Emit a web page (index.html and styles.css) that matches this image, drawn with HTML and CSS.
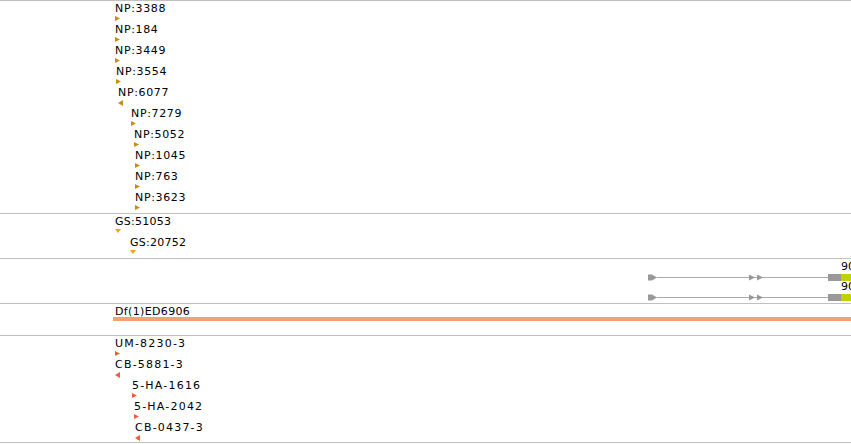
FILE: index.html
```html
<!DOCTYPE html>
<html lang="en">
<head>
  <meta charset="UTF-8">
  <title>Track View</title>
  <link rel="stylesheet" href="styles.css">
</head>
<body>
  <div class="tracks">
    <div class="track track-np" id="trackNP"></div>
    <div class="track track-gs" id="trackGS"></div>
    <div class="track track-genes" id="trackGenes">
      <div class="feature transcript" style="left: 648px; top: 1px;">
        <div class="label tx-label">9065</div>
        <svg class="tx-glyph" width="203" height="7" viewBox="0 0 203 7">
          <polygon points="0,0.5 4,0.5 9,3.5 4,6.5 0,6.5" fill="#999"/>
          <rect x="9" y="3" width="171" height="1" fill="#aaa"/>
          <polygon points="101,0.5 107,3.5 101,6.5" fill="#999"/>
          <polygon points="109,0.5 115,3.5 109,6.5" fill="#999"/>
          <rect x="180" y="0" width="13" height="7" fill="#999"/>
          <rect x="193" y="0" width="10" height="7" fill="#bfd200"/>
        </svg>
      </div>
      <div class="feature transcript" style="left: 648px; top: 21px;">
        <div class="label tx-label">9066</div>
        <svg class="tx-glyph" width="203" height="7" viewBox="0 0 203 7">
          <polygon points="0,0.5 4,0.5 9,3.5 4,6.5 0,6.5" fill="#999"/>
          <rect x="9" y="3" width="171" height="1" fill="#aaa"/>
          <polygon points="101,0.5 107,3.5 101,6.5" fill="#999"/>
          <polygon points="109,0.5 115,3.5 109,6.5" fill="#999"/>
          <rect x="180" y="0" width="13" height="7" fill="#999"/>
          <rect x="193" y="0" width="10" height="7" fill="#bfd200"/>
        </svg>
      </div>
    </div>
    <div class="track track-df">
      <div class="feature deficiency" style="left: 113px; top: 1px;">
        <div class="label df-label">Df(1)ED6906</div>
        <div class="df-bar"></div>
      </div>
    </div>
    <div class="track track-insert" id="trackIns"></div>
  </div>

  <script>
    // [label, left, top, strand]
    const npFeatures = [
      ['NP:3388', 115, 1, '+'],
      ['NP:184', 115, 22, '+'],
      ['NP:3449', 115, 43, '+'],
      ['NP:3554', 116, 64, '+'],
      ['NP:6077', 118, 85, '-'],
      ['NP:7279', 131, 106, '+'],
      ['NP:5052', 134, 127, '+'],
      ['NP:1045', 135, 148, '+'],
      ['NP:763', 135, 169, '+'],
      ['NP:3623', 135, 190, '+']
    ];
    const gsFeatures = [
      ['GS:51053', 115, 1, 'v'],
      ['GS:20752', 130, 22, 'v']
    ];
    const insFeatures = [
      ['UM-8230-3', 115, 1, '+'],
      ['CB-5881-3', 115, 22, '-'],
      ['5-HA-1616', 132, 43, '+'],
      ['5-HA-2042', 134, 64, '+'],
      ['CB-0437-3', 135, 85, '-']
    ];

    const shapes = {
      '+': { w: 5, h: 5, pts: '0,0 5,2.5 0,5' },
      '-': { w: 5, h: 6, pts: '5,0 0,3 5,6' },
      'v': { w: 6, h: 4, pts: '0,0 6,0 3,4' }
    };

    function addFeatures(trackId, list, color) {
      const track = document.getElementById(trackId);
      list.forEach(([name, left, top, strand]) => {
        const s = shapes[strand];
        const el = document.createElement('div');
        el.className = 'feature';
        el.style.left = left + 'px';
        el.style.top = top + 'px';
        el.innerHTML =
          '<div class="label">' + name + '</div>' +
          '<svg class="marker" width="' + s.w + '" height="' + s.h + '" viewBox="0 0 ' + s.w + ' ' + s.h + '">' +
          '<polygon points="' + s.pts + '" fill="' + color + '"/></svg>';
        track.appendChild(el);
      });
    }

    addFeatures('trackNP', npFeatures, '#c98d17');
    addFeatures('trackGS', gsFeatures, '#f0a31c');
    addFeatures('trackIns', insFeatures, '#f25c3c');
  </script>
</body>
</html>
```

FILE: styles.css
```css
html, body {
  margin: 0;
  padding: 0;
  background: #fff;
  overflow: hidden;
}

body {
  width: 851px;
  height: 444px;
  font-family: "DejaVu Sans", sans-serif;
  font-size: 11px;
  color: #000;
}

.tracks {
  border-top: 1px solid #c0c0c0;
}

.track {
  position: relative;
  border-bottom: 1px solid #c0c0c0;
  overflow: hidden;
}

.track-np { height: 212px; }
.track-gs { height: 44px; }
.track-genes { height: 44px; }
.track-df { height: 31px; }
.track-insert { height: 106px; }

.feature {
  position: absolute;
  white-space: nowrap;
}

.label {
  height: 13px;
  line-height: 13px;
}

.track-np .label { letter-spacing: 0.65px; }
.track-gs .label { letter-spacing: 0.25px; }
.track-df .label { letter-spacing: 0.35px; }
.track-insert .label { letter-spacing: 1.2px; }

.marker {
  display: block;
  margin-top: 1px;
}

.tx-label {
  padding-left: 193px;
}

.tx-glyph {
  display: block;
  margin-top: 1px;
}

.deficiency {
  right: 0;
}

.df-label {
  padding-left: 2px;
}

.df-bar {
  height: 4px;
  margin-top: -1px;
  background: #f3a173;
}
```
